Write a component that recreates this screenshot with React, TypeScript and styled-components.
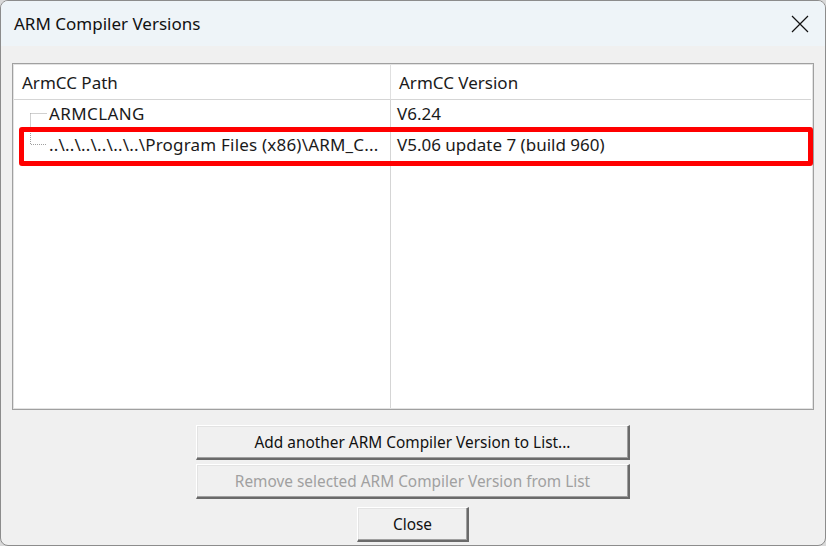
import React from "react";
import styled, { createGlobalStyle } from "styled-components";

const Global = createGlobalStyle`
  html, body { margin: 0; padding: 0; background: #d9d9d9; }
  body { font-family: "Noto Sans", "Open Sans", sans-serif; }
`;

const Window = styled.div`
  width: 826px;
  height: 546px;
  box-sizing: border-box;
  border: 1px solid #8c8c8c;
  border-radius: 8px;
  overflow: hidden;
  display: flex;
  flex-direction: column;
  background: #f0f0f0;
`;

const TitleBar = styled.div`
  height: 45px;
  flex: none;
  background: #eef4f8;
  display: flex;
  align-items: center;
  justify-content: space-between;
  padding: 0 12px 0 13px;
`;

const Title = styled.span`
  font-family: "Noto Sans", sans-serif;
  font-size: 17px;
  color: #111;
`;

const CloseGlyph = styled.svg`
  width: 18px;
  height: 18px;
  margin-right: 4px;
`;

const Body = styled.div`
  flex: 1;
  display: flex;
  flex-direction: column;
  padding: 17px 11px 0 11px;
`;

const ListBox = styled.div`
  height: 347px;
  box-sizing: border-box;
  border: 1px solid #a0a0a0;
  outline: 1px solid #e3e3e3;
  outline-offset: -2px;
  background: #fff;
  display: grid;
  grid-template-columns: 378px 1fr;
  grid-template-rows: 36px 31px 31px 1fr;
  position: relative;
  font-family: "Noto Sans", sans-serif;
  font-size: 17px;
  color: #1a1a1a;
`;

const HeadCell = styled.div<{ $last?: boolean }>`
  display: flex;
  align-items: center;
  padding-left: 8px;
  border-bottom: 1px solid #d5d5d5;
  border-right: ${(p) => (p.$last ? "none" : "1px solid #e0e0e0")};
  margin-right: ${(p) => (p.$last ? "2px" : "0")};
  margin-top: 1px;
  margin-left: ${(p) => (p.$last ? "0" : "1px")};
`;

const Cell = styled.div<{ $indent?: number; $sep?: boolean; $track?: number }>`
  display: flex;
  align-items: center;
  box-sizing: border-box;
  padding-left: ${(p) => p.$indent ?? 6}px;
  padding-bottom: 4px;
  letter-spacing: ${(p) => p.$track ?? 0}px;
  border-right: ${(p) => (p.$sep ? "1px solid #d5d5d5" : "none")};
  white-space: nowrap;
  overflow: hidden;
  position: relative;
`;

const FillCell = styled.div<{ $sep?: boolean }>`
  border-right: ${(p) => (p.$sep ? "1px solid #d5d5d5" : "none")};
`;

const Tree = styled.svg`
  position: absolute;
  left: 17px;
  top: 0;
  overflow: visible;
`;

const Highlight = styled.div`
  position: absolute;
  left: 6px;
  right: 0;
  top: 63px;
  height: 29px;
  border: 5px solid #ff0000;
  border-radius: 3px;
`;

const Buttons = styled.div`
  display: flex;
  flex-direction: column;
  align-items: center;
  padding-top: 15px;
`;

const Btn = styled.button<{ $w: number; $disabled?: boolean; $gap: number }>`
  width: ${(p) => p.$w}px;
  height: 35px;
  margin-top: ${(p) => p.$gap}px;
  box-sizing: border-box;
  background: #f0f0f0;
  border: none;
  border-top: 1px solid #ffffff;
  border-left: 1px solid #ffffff;
  border-right: 2px solid #6a6a6a;
  border-bottom: 2px solid #6a6a6a;
  box-shadow: inset -1px -1px 0 #a0a0a0, inset 1px 1px 0 #e3e3e3;
  font-family: "Noto Sans", sans-serif;
  font-size: 15.4px;
  color: ${(p) => (p.$disabled ? "#a0a0a0" : "#111")};
  padding: 0;
  cursor: default;
`;

export default function App() {
  return (
    <>
      <Global />
      <Window>
        <TitleBar>
          <Title>ARM Compiler Versions</Title>
          <CloseGlyph viewBox="0 0 18 18">
            <path d="M1 1 L17 17 M17 1 L1 17" stroke="#111" strokeWidth="1.2" fill="none" />
          </CloseGlyph>
        </TitleBar>
        <Body>
          <ListBox>
            <HeadCell>ArmCC Path</HeadCell>
            <HeadCell $last>ArmCC Version</HeadCell>
            <Cell $indent={36} $sep $track={0.4}>
              <Tree width="20" height="31">
                <path d="M0.5 13.5 V31 M0.5 13.5 H17" stroke="#a0a0a0" strokeDasharray="1 1" fill="none" />
              </Tree>
              ARMCLANG
            </Cell>
            <Cell>V6.24</Cell>
            <Cell $indent={36} $sep $track={0.2}>
              <Tree width="20" height="31">
                <path d="M0.5 0 V13.5 H17" stroke="#a0a0a0" strokeDasharray="1 1" fill="none" />
              </Tree>
              ..\..\..\..\..\..\Program Files (x86)\ARM_C...
            </Cell>
            <Cell>V5.06 update 7 (build 960)</Cell>
            <FillCell $sep />
            <FillCell />
            <Highlight />
          </ListBox>
          <Buttons>
            <Btn $w={434} $gap={0}>Add another ARM Compiler Version to List...</Btn>
            <Btn $w={434} $gap={4} $disabled>Remove selected ARM Compiler Version from List</Btn>
            <Btn $w={112} $gap={8}>Close</Btn>
          </Buttons>
        </Body>
      </Window>
    </>
  );
}
